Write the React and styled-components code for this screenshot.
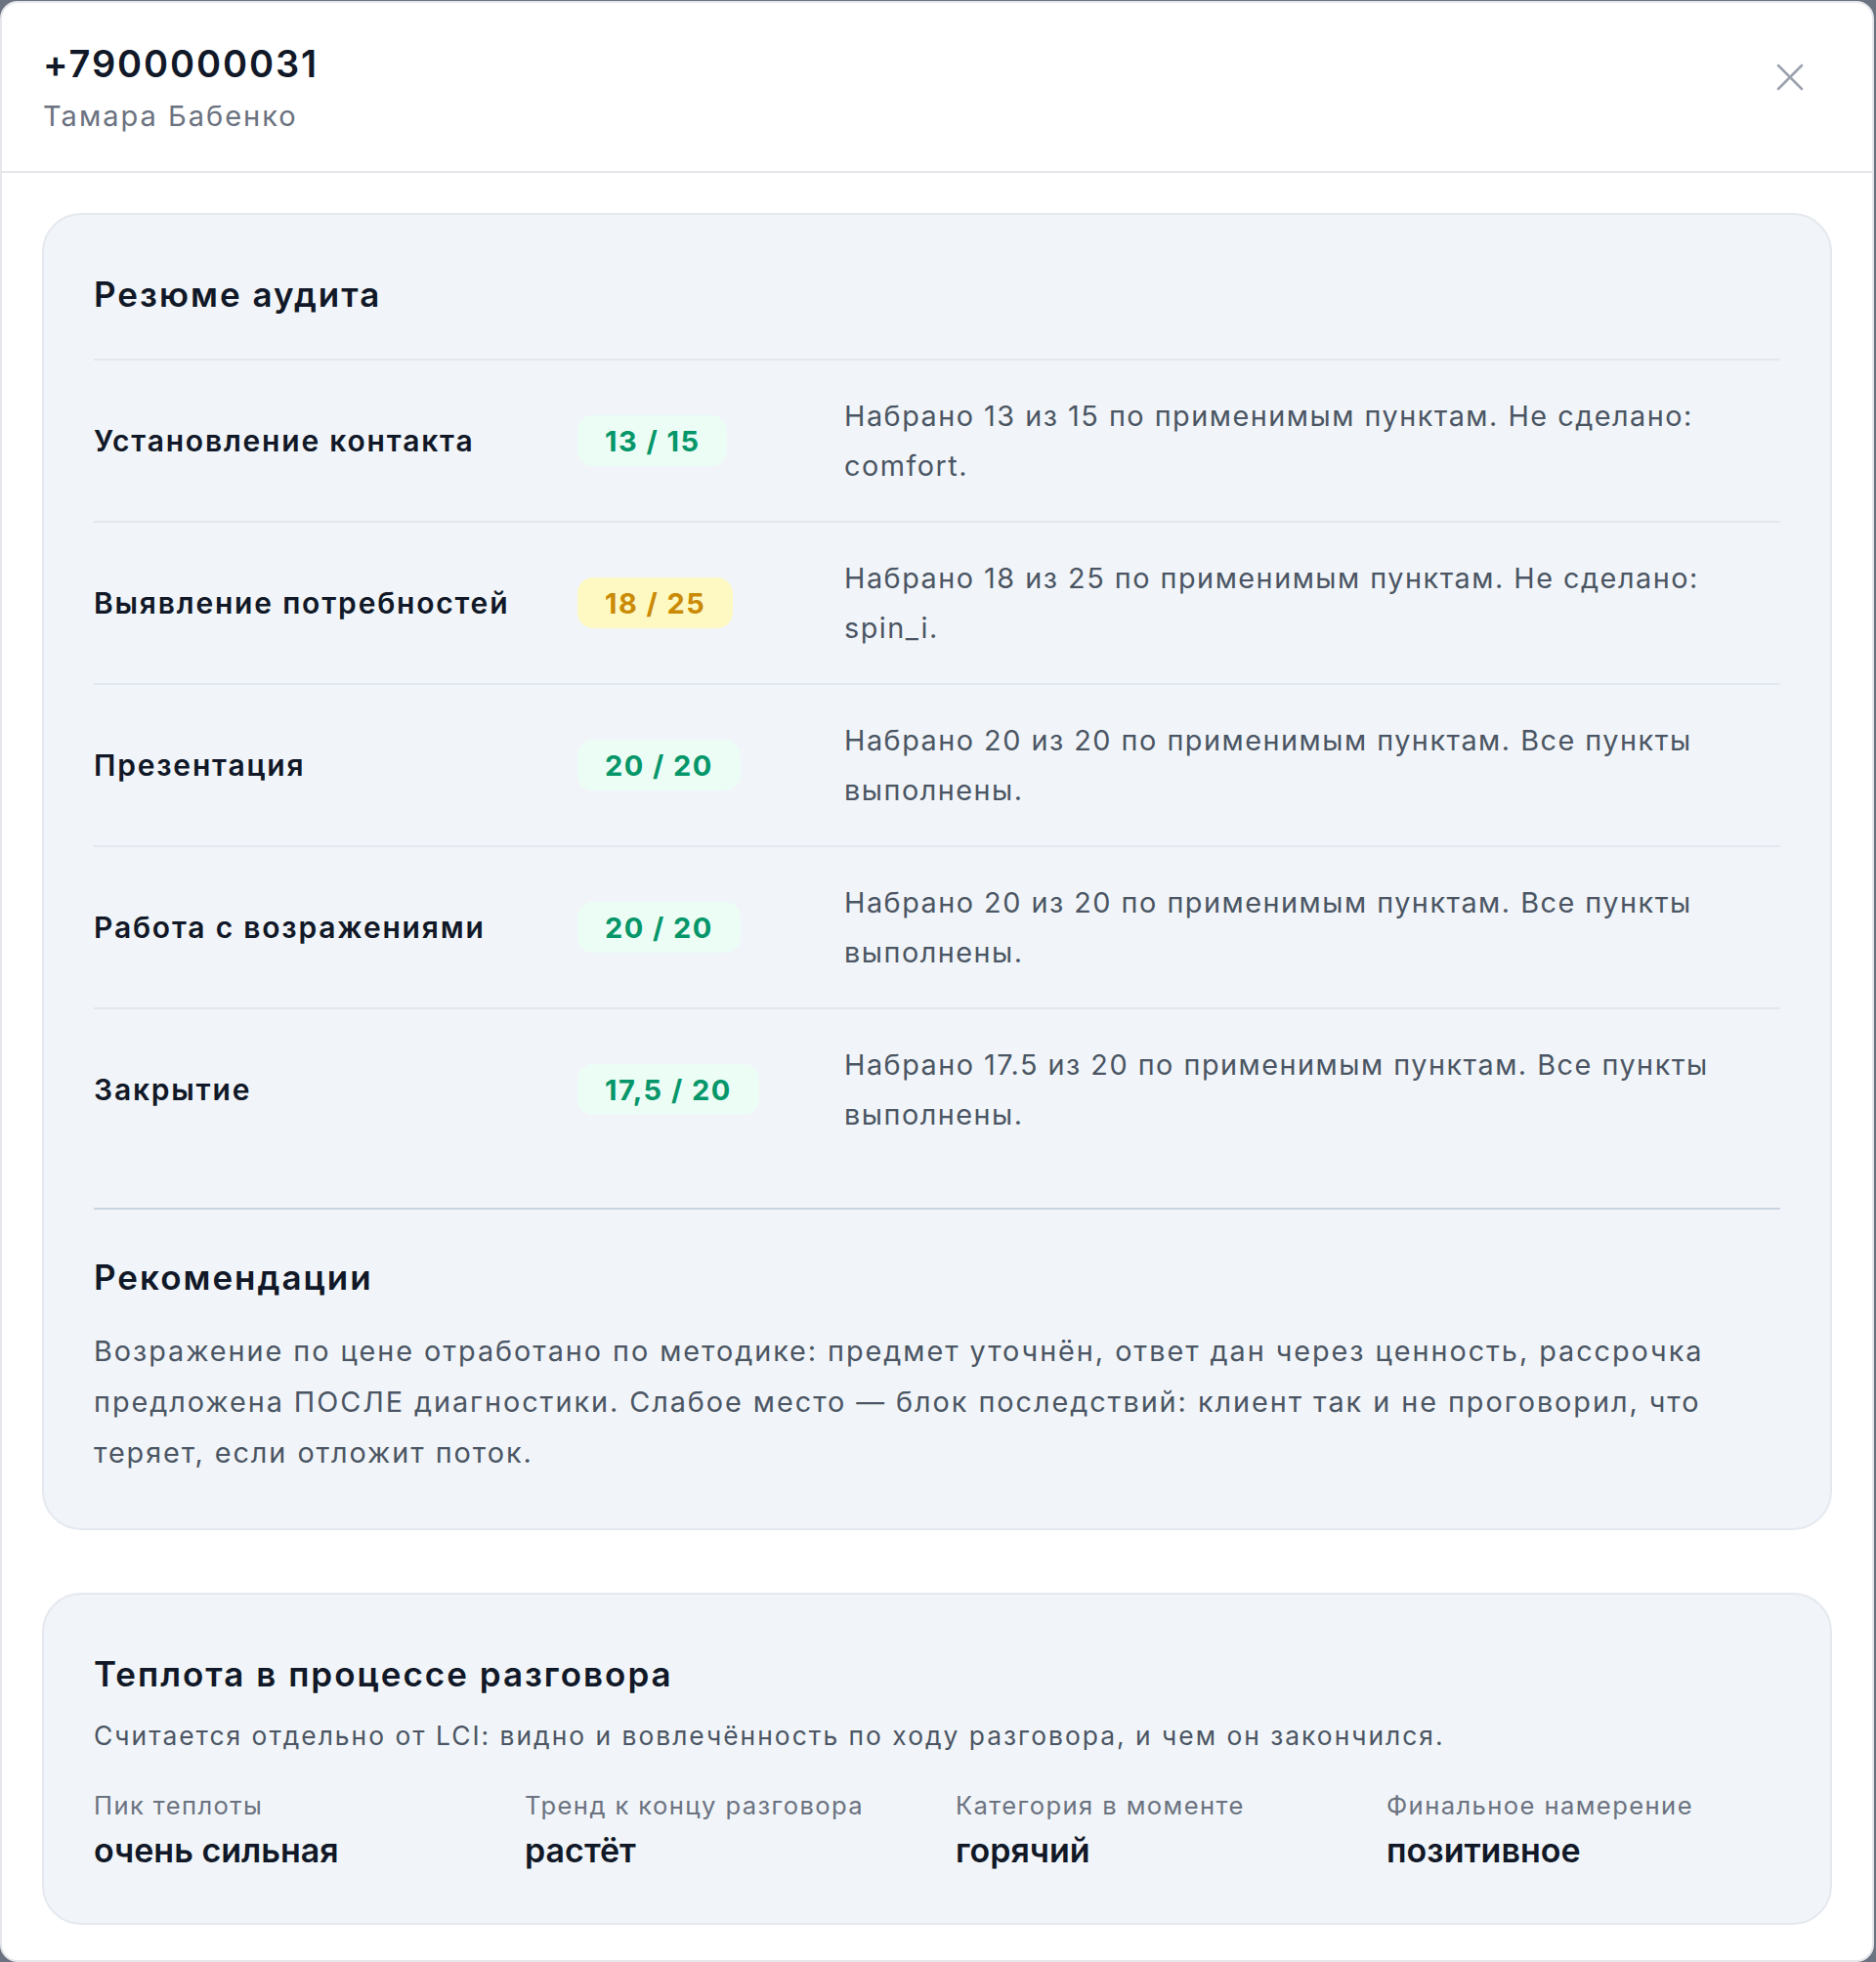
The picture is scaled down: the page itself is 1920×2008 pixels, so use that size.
import styled, { createGlobalStyle } from "styled-components";

const GlobalStyle = createGlobalStyle`
  * {
    box-sizing: border-box;
  }
  body {
    margin: 0;
    background: #6b7280;
    font-family: "Inter", "Noto Sans", sans-serif;
    -webkit-font-smoothing: antialiased;
  }
`;

const blocks = [
  {
    name: "Установление контакта",
    score: "13 / 15",
    tone: "good",
    text: "Набрано 13 из 15 по применимым пунктам. Не сделано: comfort.",
  },
  {
    name: "Выявление потребностей",
    score: "18 / 25",
    tone: "mid",
    text: "Набрано 18 из 25 по применимым пунктам. Не сделано: spin_i.",
  },
  {
    name: "Презентация",
    score: "20 / 20",
    tone: "good",
    text: "Набрано 20 из 20 по применимым пунктам. Все пункты выполнены.",
  },
  {
    name: "Работа с возражениями",
    score: "20 / 20",
    tone: "good",
    text: "Набрано 20 из 20 по применимым пунктам. Все пункты выполнены.",
  },
  {
    name: "Закрытие",
    score: "17,5 / 20",
    tone: "good",
    text: "Набрано 17.5 из 20 по применимым пунктам. Все пункты выполнены.",
  },
];

const warmth = [
  { label: "Пик теплоты", value: "очень сильная" },
  { label: "Тренд к концу разговора", value: "растёт" },
  { label: "Категория в моменте", value: "горячий" },
  { label: "Финальное намерение", value: "позитивное" },
];

export default function App() {
  return (
    <>
      <GlobalStyle />
      <Modal>
        <Header>
          <div>
            <Phone>+7900000031</Phone>
            <ClientName>Тамара Бабенко</ClientName>
          </div>
          <CloseButton aria-label="Закрыть">
            <svg width="28" height="28" viewBox="0 0 28 28" fill="none">
              <path
                d="M2 2L26 26M26 2L2 26"
                stroke="#9ca3af"
                strokeWidth="2.6"
                strokeLinecap="round"
              />
            </svg>
          </CloseButton>
        </Header>

        <Body>
          <Card>
            <CardTitle>Резюме аудита</CardTitle>
            <BlockList>
              {blocks.map((b, i) => (
                <BlockRow key={i}>
                  <BlockName>{b.name}</BlockName>
                  <Score tone={b.tone}>{b.score}</Score>
                  <BlockText>{b.text}</BlockText>
                </BlockRow>
              ))}
            </BlockList>
            <Recommendations>
              <CardTitle>Рекомендации</CardTitle>
              <RecText>
                Возражение по цене отработано по методике: предмет уточнён, ответ
                дан через ценность, рассрочка предложена ПОСЛЕ диагностики.
                Слабое место — блок последствий: клиент так и не проговорил, что
                теряет, если отложит поток.
              </RecText>
            </Recommendations>
          </Card>

          <Card>
            <CardTitle>Теплота в процессе разговора</CardTitle>
            <Subtitle>
              Считается отдельно от LCI: видно и вовлечённость по ходу
              разговора, и чем он закончился.
            </Subtitle>
            <StatsGrid>
              {warmth.map((w, i) => (
                <div key={i}>
                  <StatLabel>{w.label}</StatLabel>
                  <StatValue>{w.value}</StatValue>
                </div>
              ))}
            </StatsGrid>
          </Card>
        </Body>
      </Modal>
    </>
  );
}

const Modal = styled.div`
  width: 1918px;
  min-height: 2005px;
  margin-top: 1px;
  background: #fff;
  border: 2px solid #e5e7eb;
  border-radius: 18px;
  overflow: hidden;
`;

const Header = styled.div`
  display: flex;
  justify-content: space-between;
  align-items: flex-start;
  height: 174px;
  padding: 38px 70px 0 42px;
  border-bottom: 2px solid #e5e7eb;
`;

const Phone = styled.div`
  font-size: 38px;
  line-height: 48px;
  font-weight: 600;
  color: #111827;
  letter-spacing: 1.9px;
`;

const ClientName = styled.div`
  margin-top: 10px;
  font-size: 29px;
  line-height: 40px;
  color: #6b7280;
  letter-spacing: 2px;
`;

const CloseButton = styled.button`
  display: flex;
  align-items: center;
  justify-content: center;
  margin-top: 24px;
  padding: 0;
  border: none;
  background: none;
  cursor: pointer;
`;

const Body = styled.div`
  display: flex;
  flex-direction: column;
  gap: 64px;
  padding: 41px 41px 36px;
`;

const Card = styled.section`
  background: #f1f5f9;
  border: 2px solid #e5e9ef;
  border-radius: 40px;
  padding: 51px;
`;

const CardTitle = styled.h2`
  margin: 0 0 36px;
  font-size: 35px;
  line-height: 60px;
  font-weight: 600;
  color: #111827;
  letter-spacing: 2px;
`;

const BlockList = styled.div`
  display: flex;
  flex-direction: column;
`;

const BlockRow = styled.div`
  display: grid;
  grid-template-columns: 463px 241px 1fr;
  column-gap: 32px;
  align-items: center;
  padding: 31px 0;
  border-top: 2px solid #e2e8f0;
`;

const BlockName = styled.div`
  font-size: 30px;
  font-weight: 600;
  color: #111827;
  letter-spacing: 1.8px;
`;

const Score = styled.span`
  justify-self: start;
  display: inline-flex;
  align-items: center;
  height: 52px;
  padding: 0 28px;
  border-radius: 16px;
  font-size: 29px;
  font-weight: 700;
  letter-spacing: 0.05em;
  background: ${(p) => (p.tone === "mid" ? "#fef9c3" : "#ecfdf5")};
  color: ${(p) => (p.tone === "mid" ? "#ca8a04" : "#059669")};
`;

const BlockText = styled.p`
  margin: 0;
  font-size: 28.8px;
  line-height: 51px;
  color: #4b5563;
  letter-spacing: 1.5px;
`;

const Recommendations = styled.div`
  margin-top: 39px;
  padding-top: 39px;
  border-top: 2px solid #cbd5e1;

  h2 {
    margin-bottom: 20px;
  }
`;

const RecText = styled.p`
  margin: 0;
  font-size: 28.8px;
  line-height: 52px;
  color: #4b5563;
  letter-spacing: 1.95px;
`;

const Subtitle = styled.p`
  margin: -23px 0 0;
  font-size: 26.4px;
  line-height: 40px;
  color: #4b5563;
  letter-spacing: 2px;
`;

const StatsGrid = styled.div`
  display: grid;
  grid-template-columns: repeat(4, 1fr);
  column-gap: 38px;
  margin-top: 34px;
`;

const StatLabel = styled.div`
  font-size: 25.6px;
  line-height: 36px;
  color: #6b7280;
  letter-spacing: 1.4px;
`;

const StatValue = styled.div`
  margin-top: 5px;
  font-size: 34px;
  line-height: 46px;
  font-weight: 600;
  color: #111827;
`;
